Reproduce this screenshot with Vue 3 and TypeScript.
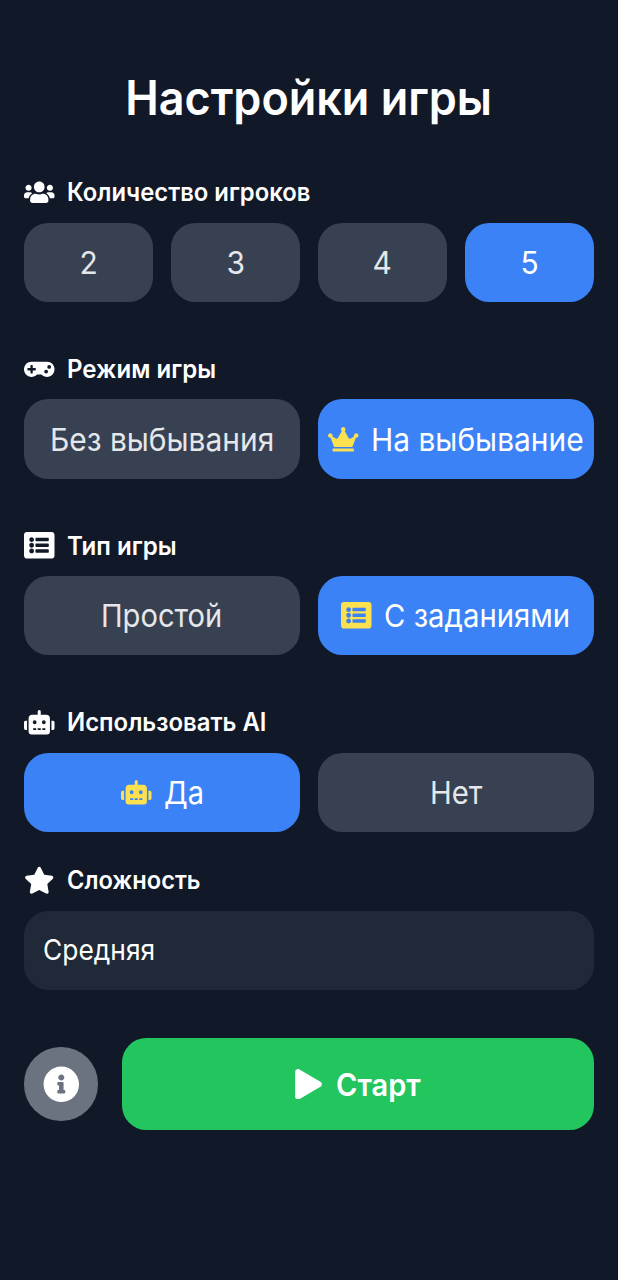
<script setup lang="ts">
import { ref } from 'vue'

type IconName = 'users' | 'gamepad' | 'list' | 'robot' | 'star' | 'crown' | 'info' | 'play'

interface Icon {
  box: string
  d: string
}

interface Option {
  label: string
  fit: string
  icon?: IconName
}

interface Section {
  title: string
  fit: string
  icon: IconName
  options: Option[]
  selected: number
}

const icons: Record<IconName, Icon> = {
  users: {
    box: '0 0 640 512',
    d: 'M96 224c35.3 0 64-28.7 64-64s-28.7-64-64-64-64 28.7-64 64 28.7 64 64 64zm448 0c35.3 0 64-28.7 64-64s-28.7-64-64-64-64 28.7-64 64 28.7 64 64 64zm32 32h-64c-17.6 0-33.5 7.1-45.1 18.6 40.3 22.1 68.9 62 75.1 109.4h66c17.7 0 32-14.3 32-32v-32c0-35.3-28.7-64-64-64zm-256 0c61.9 0 112-50.1 112-112S381.9 32 320 32 208 82.1 208 144s50.1 112 112 112zm76.8 32h-8.3c-20.8 10-43.9 16-68.5 16s-47.6-6-68.5-16h-8.3C179.6 288 128 339.6 128 403.2V432c0 26.5 21.5 48 48 48h288c26.5 0 48-21.5 48-48v-28.8c0-63.6-51.6-115.2-115.2-115.2zm-223.7-13.4C161.5 263.1 145.6 256 128 256H64c-35.3 0-64 28.7-64 64v32c0 17.7 14.3 32 32 32h65.9c6.3-47.4 34.9-87.3 75.2-109.4z',
  },
  gamepad: {
    box: '0 0 640 512',
    d: 'M480.07 96H160a160 160 0 1 0 114.24 272h91.5A160 160 0 1 0 480.07 96zM248 268a12 12 0 0 1-12 12h-52v52a12 12 0 0 1-12 12h-24a12 12 0 0 1-12-12v-52H84a12 12 0 0 1-12-12v-24a12 12 0 0 1 12-12h52v-52a12 12 0 0 1 12-12h24a12 12 0 0 1 12 12v52h52a12 12 0 0 1 12 12zm216 76a40 40 0 1 1 40-40 40 40 0 0 1-40 40zm64-96a40 40 0 1 1 40-40 40 40 0 0 1-40 40z',
  },
  list: {
    box: '0 0 512 512',
    d: 'M464 480H48c-26.5 0-48-21.5-48-48V80c0-26.5 21.5-48 48-48h416c26.5 0 48 21.5 48 48v352c0 26.5-21.5 48-48 48zM128 120c-22.1 0-40 17.9-40 40s17.9 40 40 40 40-17.9 40-40-17.9-40-40-40zm0 96c-22.1 0-40 17.9-40 40s17.9 40 40 40 40-17.9 40-40-17.9-40-40-40zm0 96c-22.1 0-40 17.9-40 40s17.9 40 40 40 40-17.9 40-40-17.9-40-40-40zm288-136v-32c0-6.6-5.4-12-12-12H204c-6.6 0-12 5.4-12 12v32c0 6.6 5.4 12 12 12h200c6.6 0 12-5.4 12-12zm0 96v-32c0-6.6-5.4-12-12-12H204c-6.6 0-12 5.4-12 12v32c0 6.6 5.4 12 12 12h200c6.6 0 12-5.4 12-12zm0 96v-32c0-6.6-5.4-12-12-12H204c-6.6 0-12 5.4-12 12v32c0 6.6 5.4 12 12 12h200c6.6 0 12-5.4 12-12z',
  },
  robot: {
    box: '0 0 640 512',
    d: 'M32 224H64V416H32A32 32 0 0 1 0 384V256A32 32 0 0 1 32 224Zm512-48V448a64 64 0 0 1-64 64H160a64 64 0 0 1-64-64V176a80 80 0 0 1 80-80H288V32a32 32 0 0 1 64 0V96H464A80 80 0 0 1 544 176ZM264 256a40 40 0 1 0-40 40A40 40 0 0 0 264 256Zm-8 128H192v32h64Zm96 0H288v32h64ZM456 256a40 40 0 1 0-40 40A40 40 0 0 0 456 256Zm-8 128H384v32h64ZM640 256V384a32 32 0 0 1-32 32H576V224h32A32 32 0 0 1 640 256Z',
  },
  star: {
    box: '0 0 576 512',
    d: 'M259.3 17.8L194 150.2 47.9 171.5c-26.2 3.8-36.7 36.1-17.7 54.6l105.7 103-25 145.5c-4.5 26.3 23.2 46 46.4 33.7L288 439.6l130.7 68.7c23.2 12.2 50.9-7.4 46.4-33.7l-25-145.5 105.7-103c19-18.5 8.5-50.8-17.7-54.6L382 150.2 316.7 17.8c-11.7-23.6-45.6-23.9-57.4 0z',
  },
  crown: {
    box: '0 0 640 512',
    d: 'M528 448H112c-8.8 0-16 7.2-16 16v32c0 8.8 7.2 16 16 16h416c8.8 0 16-7.2 16-16v-32c0-8.8-7.2-16-16-16zm64-320c-26.5 0-48 21.5-48 48 0 7.1 1.6 13.7 4.4 19.8L476 239.2c-15.4 9.2-35.3 4-44.2-11.6L350.3 85C361 76.2 368 63 368 48c0-26.5-21.5-48-48-48s-48 21.5-48 48c0 15 7 28.2 17.7 37l-81.5 142.6c-8.9 15.6-28.9 20.8-44.2 11.6l-72.3-43.4c2.7-6 4.4-12.7 4.4-19.8 0-26.5-21.5-48-48-48S0 149.5 0 176s21.5 48 48 48c2.6 0 5.2-.4 7.7-.8L128 416h384l72.3-192.8c2.5.4 5.1.8 7.7.8 26.5 0 48-21.5 48-48s-21.5-48-48-48z',
  },
  info: {
    box: '0 0 512 512',
    d: 'M256 8C119 8 8 119.1 8 256c0 137 111 248 248 248s248-111 248-248C504 119.1 393 8 256 8zm0 110c23.2 0 42 18.8 42 42s-18.8 42-42 42-42-18.8-42-42 18.8-42 42-42zm56 254c0 6.6-5.4 12-12 12h-88c-6.6 0-12-5.4-12-12v-24c0-6.6 5.4-12 12-12h12v-64h-12c-6.6 0-12-5.4-12-12v-24c0-6.6 5.4-12 12-12h64c6.6 0 12 5.4 12 12v100h12c6.6 0 12 5.4 12 12v24z',
  },
  play: {
    box: '0 0 448 512',
    d: 'M424.4 214.7L72.4 6.6C43.8-10.3 0 6.1 0 47.9V464c0 37.5 40.7 60.1 72.4 41.3l352-208c31.4-18.5 31.5-64.1 0-82.6z',
  },
}

const sections = ref<Section[]>([
  {
    title: 'Количество игроков',
    fit: 'fit-players',
    icon: 'users',
    options: [
      { label: '2', fit: 'fit-digit' },
      { label: '3', fit: 'fit-digit' },
      { label: '4', fit: 'fit-digit' },
      { label: '5', fit: 'fit-digit' },
    ],
    selected: 3,
  },
  {
    title: 'Режим игры',
    fit: 'fit-mode',
    icon: 'gamepad',
    options: [
      { label: 'Без выбывания', fit: 'fit-stay' },
      { label: 'На выбывание', fit: 'fit-knockout', icon: 'crown' },
    ],
    selected: 1,
  },
  {
    title: 'Тип игры',
    fit: 'fit-type',
    icon: 'list',
    options: [
      { label: 'Простой', fit: 'fit-simple' },
      { label: 'С заданиями', fit: 'fit-tasks', icon: 'list' },
    ],
    selected: 1,
  },
  {
    title: 'Использовать AI',
    fit: 'fit-ai',
    icon: 'robot',
    options: [
      { label: 'Да', fit: 'fit-yes', icon: 'robot' },
      { label: 'Нет', fit: 'fit-no' },
    ],
    selected: 0,
  },
])
</script>

<template>
  <main class="screen">
    <h1 class="title">Настройки игры</h1>

    <section v-for="section in sections" :key="section.title" class="section">
      <h2 class="heading">
        <svg class="icon" :viewBox="icons[section.icon].box"><path :d="icons[section.icon].d" /></svg>
        <span class="label" :class="section.fit">{{ section.title }}</span>
      </h2>
      <div class="options" :class="{ four: section.options.length === 4 }">
        <button
          v-for="(option, i) in section.options"
          :key="option.label"
          type="button"
          class="option"
          :class="{ active: section.selected === i }"
          @click="section.selected = i"
        >
          <svg v-if="option.icon" class="icon accent" :viewBox="icons[option.icon].box">
            <path :d="icons[option.icon].d" />
          </svg>
          <span class="label" :class="option.fit">{{ option.label }}</span>
        </button>
      </div>
    </section>

    <section class="section difficulty">
      <h2 class="heading">
        <svg class="icon" :viewBox="icons.star.box"><path :d="icons.star.d" /></svg>
        <span class="label fit-difficulty">Сложность</span>
      </h2>
      <div class="select"><span class="label fit-medium">Средняя</span></div>
    </section>

    <footer class="footer">
      <button type="button" class="info">
        <svg class="info-icon" :viewBox="icons.info.box"><path :d="icons.info.d" /></svg>
      </button>
      <button type="button" class="start">
        <svg class="play-icon" :viewBox="icons.play.box"><path :d="icons.play.d" /></svg>
        <span class="label fit-start">Старт</span>
      </button>
    </footer>
  </main>
</template>

<style>
body {
  margin: 0;
  background: #111827;
}
</style>

<style scoped>
.screen {
  box-sizing: border-box;
  width: 618px;
  height: 1280px;
  padding: 70px 24.4px 0;
  background: #111827;
  color: #fff;
  font-family: Inter, 'Noto Sans', sans-serif;
}
.title {
  margin: 0 0 48px;
  height: 56px;
  line-height: 56px;
  font-size: 47.5px;
  font-weight: 600;
  text-align: center;
  white-space: nowrap;
  transform: scaleX(0.946);
}
.section {
  margin-bottom: 48.7px;
}
.section:nth-of-type(4) {
  margin-bottom: 30.1px;
}
.section.difficulty {
  margin-bottom: 48.3px;
}
.heading {
  display: flex;
  align-items: center;
  gap: 12.2px;
  margin: 0 0 12.2px;
  height: 36.6px;
  font-size: 25px;
  font-weight: 600;
  white-space: nowrap;
}
.icon {
  flex: none;
  width: 30.5px;
  height: 30.5px;
  fill: currentColor;
}
.accent {
  color: #fbe04f;
}
.options {
  display: grid;
  grid-template-columns: repeat(2, 1fr);
  gap: 18.3px;
}
.options.four {
  grid-template-columns: repeat(4, 1fr);
}
.option {
  display: flex;
  align-items: center;
  justify-content: center;
  gap: 12.2px;
  height: 79.2px;
  padding: 0;
  border: 0;
  border-radius: 24.4px;
  background: #374151;
  color: #e5e7eb;
  font-family: inherit;
  font-size: 31.5px;
  font-weight: 400;
  white-space: nowrap;
}
.option.active {
  background: #3b82f6;
  color: #fff;
}
.select {
  display: flex;
  align-items: center;
  box-sizing: border-box;
  height: 79.2px;
  padding: 0 18.3px 1.5px;
  border-radius: 24.4px;
  background: #1f2937;
  font-size: 28.5px;
  font-weight: 400;
}
.footer {
  display: flex;
  align-items: center;
  gap: 24.4px;
}
.info,
.start {
  display: flex;
  align-items: center;
  justify-content: center;
  padding: 0;
  border: 0;
  color: #fff;
  fill: #fff;
}
.info {
  flex: none;
  width: 73.2px;
  height: 73.2px;
  border-radius: 50%;
  background: #6b7280;
}
.info-icon {
  width: 36.6px;
  height: 36.6px;
}
.start {
  flex: 1;
  gap: 14px;
  height: 91.5px;
  border-radius: 24.4px;
  background: #22c55e;
  font-family: inherit;
  font-size: 31px;
  font-weight: 600;
}
.play-icon {
  width: 27px;
  height: 30.5px;
}

/* Condensed labels: negative margins give back the width the scaling frees */
.label {
  transform-origin: left center;
}
.fit-digit,
.fit-stay,
.fit-simple,
.fit-no {
  transform-origin: center;
}
.fit-digit {
  transform: scaleX(0.95);
}
.fit-players {
  transform: scaleX(0.953);
}
.fit-mode {
  transform: scaleX(0.963);
}
.fit-type {
  transform: scaleX(0.965);
}
.fit-ai {
  transform: scaleX(0.957);
}
.fit-difficulty {
  transform: scaleX(0.945);
}
.fit-stay {
  transform: scaleX(0.95);
}
.fit-knockout {
  margin-right: -11px;
  transform: scaleX(0.95);
}
.fit-simple {
  transform: scaleX(0.925);
}
.fit-tasks {
  margin-right: -14px;
  transform: scaleX(0.93);
}
.fit-yes {
  margin-right: -4px;
  transform: scaleX(0.92);
}
.fit-no {
  transform: scaleX(0.93);
}
.fit-medium {
  transform: scaleX(0.925);
}
.fit-start {
  margin-right: -6px;
  transform: scaleX(0.937);
}
</style>
